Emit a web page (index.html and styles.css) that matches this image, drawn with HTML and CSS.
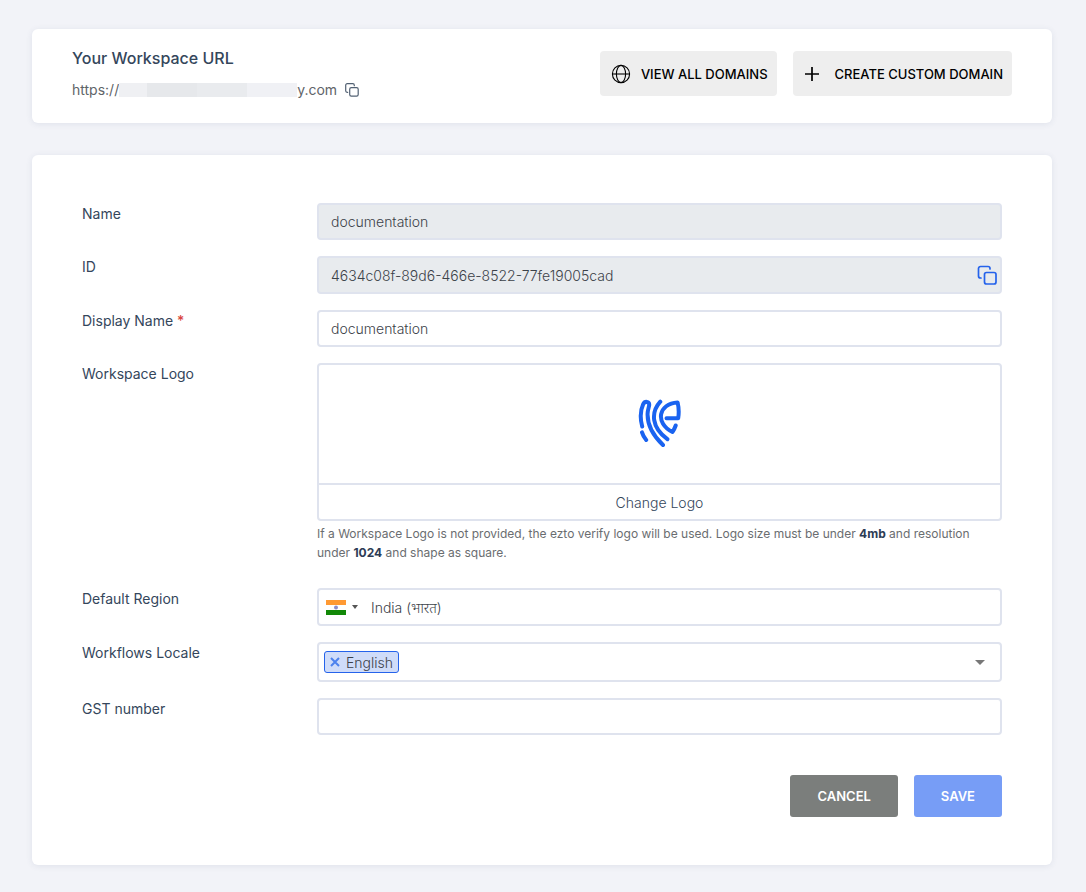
FILE: index.html
```html
<!DOCTYPE html>
<html lang="en">
<head>
<meta charset="utf-8">
<meta name="viewport" content="width=device-width, initial-scale=1">
<title>Workspace settings</title>
<link rel="stylesheet" href="styles.css">
</head>
<body>
<main class="page">
  <section class="card domain-card">
    <div class="domain-info">
      <h1 class="domain-title">Your Workspace URL</h1>
      <div class="domain-url">
        <span>https://</span><span class="redacted"><i></i><i></i><i></i><i></i></span><span>y.com</span>
        <button type="button" class="icon-button url-copy" aria-label="Copy URL">
          <svg width="14" height="14" viewBox="0 0 14 14" fill="none" stroke="currentColor" stroke-width="1.2" stroke-linecap="round"><rect x="4.7" y="4.7" width="8.5" height="8.5" rx="1.6"/><path d="M2.7 9.3H2.2A1.5 1.5 0 0 1 .7 7.8V2.2A1.5 1.5 0 0 1 2.2.7h5.6a1.5 1.5 0 0 1 1.500 1.500v.5"/></svg>
        </button>
      </div>
    </div>
    <div class="domain-actions">
      <button type="button" class="domain-button">
        <svg width="20" height="20" viewBox="0 0 20 20" fill="none" stroke="currentColor" stroke-width="1.1"><circle cx="10" cy="10" r="8.6"/><ellipse cx="10" cy="10" rx="4.600" ry="8.6"/><path d="M1.4 10h17.2"/></svg>
        <span>VIEW ALL DOMAINS</span>
      </button>
      <button type="button" class="domain-button create-button">
        <svg width="14" height="14" viewBox="0 0 14 14" fill="none" stroke="currentColor" stroke-width="1.7"><path d="M7 0v14M0 7h14"/></svg>
        <span>CREATE CUSTOM DOMAIN</span>
      </button>
    </div>
  </section>

  <form class="card settings-card">
    <div class="row">
      <label class="row-label" for="name">Name</label>
      <input class="field" id="name" type="text" value="documentation" disabled>
    </div>
    <div class="row">
      <label class="row-label" for="workspace-id">ID</label>
      <div class="field-group locked">
        <input class="bare-input" id="workspace-id" type="text" value="4634c08f-89d6-466e-8522-77fe19005cad" disabled>
        <button type="button" class="icon-button id-copy" aria-label="Copy ID">
          <svg width="20" height="20" viewBox="0 0 20 20" fill="none" stroke="currentColor" stroke-width="1.700" stroke-linecap="round"><rect x="7.500" y="7.500" width="11.500" height="11.500" rx="2"/><path d="M4 13H3.500a2 2 0 0 1-2-2V3.500a2 2 0 0 1 2-2h7.500a2 2 0 0 1 2 2v.5"/></svg>
        </button>
      </div>
    </div>
    <div class="row">
      <label class="row-label" for="display-name">Display Name <span class="required">*</span></label>
      <input class="field" id="display-name" type="text" value="documentation">
    </div>
    <div class="row logo-row">
      <label class="row-label" for="change-logo">Workspace Logo</label>
      <div>
        <div class="logo-box">
          <div class="logo-preview">
            <svg width="44" height="50" viewBox="0 0 44 50" fill="none" stroke="#1a63f0" stroke-width="4" stroke-linecap="round" stroke-linejoin="round" role="img" aria-label="Workspace logo"><path d="M4.200 27.500C2.200 20 2.500 11 5.200 5.200c1.600-3.400 6.200-3 6 .8-.2 2.400-1.400 4-1.600 8.600C9.200 26 14 35.500 25 46M4 33.300c1 3.200 2.300 5.400 4.200 7.700M22.300 2.700C12.500 13.500 13.500 28.500 29.400 40.200M28.500 19.300h11.700c.8-5 .8-10-.6-15.900C20.500 4.500 16.500 24 34.500 33c1.500-2.400 2.500-4.400 3.200-6.500"/></svg>
          </div>
          <button type="button" class="change-logo" id="change-logo">Change Logo</button>
        </div>
        <p class="help">If a Workspace Logo is not provided, the ezto verify logo will be used. Logo size must be under <strong>4mb</strong> and resolution under <strong>1024</strong> and shape as square.</p>
      </div>
    </div>
    <div class="row">
      <label class="row-label" for="region">Default Region</label>
      <div class="field-group">
        <button type="button" class="flag-button" aria-label="Choose country">
          <svg width="20" height="15" viewBox="0 0 20 15"><path fill="#f93" d="M0 0h20v5H0z"/><path fill="#fff" d="M0 5h20v5H0z"/><path fill="#128807" d="M0 10h20v5H0z"/><circle cx="10" cy="7.500" r="2" fill="#8c8ccb"/></svg>
          <span class="small-caret"></span>
        </button>
        <input class="bare-input" id="region" type="text" value="India (भारत)">
      </div>
    </div>
    <div class="row">
      <label class="row-label" for="locale">Workflows Locale</label>
      <div class="field-group locale-group">
        <span class="chip">
          <button type="button" class="icon-button chip-remove" aria-label="Remove English"><svg width="10" height="10" viewBox="0 0 10 10" stroke="currentColor" stroke-width="2"><path d="m1 1 8 8M9 1 1 9"/></svg></button>
          <span>English</span>
        </span>
        <input class="bare-input" id="locale" type="text" autocomplete="off">
        <button type="button" class="icon-button locale-toggle" aria-label="Show locales"><span class="caret"></span></button>
      </div>
    </div>
    <div class="row">
      <label class="row-label" for="gst">GST number</label>
      <input class="field" id="gst" type="text">
    </div>
    <div class="form-actions">
      <button type="button" class="action cancel">CANCEL</button>
      <button type="submit" class="action save">SAVE</button>
    </div>
  </form>
</main>
</body>
</html>
```

FILE: styles.css
```css
*, *::before, *::after { box-sizing: border-box; }

body {
  margin: 0;
  background: #f2f3f8;
  color: #34465b;
  font-family: Inter, "Noto Sans", "Liberation Sans", sans-serif;
  font-size: 14px;
}

button, input { font: inherit; color: inherit; }
button { cursor: pointer; }

.page {
  display: flex;
  flex-direction: column;
  gap: 32px;
  padding: 29px 34px 27px 32px;
}

.card {
  background: #fff;
  border-radius: 6px;
  box-shadow: 0 1px 6px rgba(60, 80, 120, 0.1);
}

.domain-card {
  display: flex;
  justify-content: space-between;
  align-items: flex-start;
  gap: 24px;
  padding: 17px 40px 22px;
}

.domain-title {
  margin: 0;
  font-size: 16px;
  line-height: 24px;
  font-weight: 500;
}

.domain-url {
  display: flex;
  align-items: center;
  margin-top: 9px;
  line-height: 22px;
  color: #606468;
}

.redacted {
  display: flex;
  width: 178px;
  height: 14px;
}
.redacted i { flex: 50 0 0; background: #e9ebee; }
.redacted i:first-child { flex-grow: 28; background: #eff0f3; }
.redacted i:nth-child(2) { background: #e6e8eb; }
.redacted i:last-child { background: #f0f1f5; }

.icon-button {
  display: flex;
  align-items: center;
  justify-content: center;
  padding: 0;
  border: 0;
  background: none;
}

.url-copy { margin-left: 8px; color: #526173; }

.domain-actions { display: flex; gap: 16px; padding-top: 5px; }

.domain-button {
  display: flex;
  align-items: center;
  gap: 10px;
  height: 45px;
  padding: 0 9px 0 11px;
  border: 0;
  border-radius: 4px;
  background: #eee;
  color: #000;
  font-size: 13px;
  font-weight: 500;
}
.create-button { gap: 16px; padding-left: 12px; }

.settings-card { padding: 48px 50px; }

.row {
  display: grid;
  grid-template-columns: 235px minmax(0, 1fr);
  align-items: start;
  margin-bottom: 16px;
}
.logo-row { margin-bottom: 26px; }

.row-label { line-height: 22px; }
.required { color: #d9453d; font-weight: 500; }

.field, .field-group, .logo-box {
  width: 100%;
  border: 2px solid #dfe3ee;
  border-radius: 4px;
  background: #fff;
}

.field, .bare-input { color: #3c4249; font-weight: 300; }
.field { height: 37px; padding: 0 12px; }
.field:disabled, .locked { background: #e8ebee; }

.field-group { display: flex; align-items: center; height: 38px; }

.bare-input {
  flex: 1;
  min-width: 0;
  height: 100%;
  padding: 0 12px;
  border: 0;
  background: none;
}

.id-copy { margin-right: 3px; color: #2563eb; }

.logo-preview {
  display: flex;
  align-items: center;
  justify-content: center;
  height: 118px;
}

.change-logo {
  display: block;
  width: 100%;
  height: 36px;
  border: 0;
  border-top: 2px solid #dfe3ee;
  background: none;
  font-weight: 300;
}

.help {
  margin: 3px 0 0;
  color: #6a6d70;
  font-size: 12px;
  line-height: 19px;
}
.help strong { color: #2d3c55; font-weight: 700; }

.flag-button {
  display: flex;
  align-items: center;
  gap: 6px;
  height: 100%;
  padding: 0 1px 0 7px;
  border: 0;
  background: none;
}

.small-caret {
  border: 3px solid transparent;
  border-top: 4px solid #555;
  border-bottom: 0;
}

.locale-group { height: 40px; padding-left: 5px; }

.chip {
  display: flex;
  align-items: center;
  gap: 6px;
  height: 22px;
  padding: 0 5px;
  border: 1px solid #2563eb;
  border-radius: 3px;
  background: #cfdcf9;
  color: #3c4249;
  font-weight: 300;
}
.chip-remove { color: #4c82ee; }

.locale-toggle { width: 40px; height: 100%; }
.caret {
  border: 5px solid transparent;
  border-top-color: #777;
  border-bottom: 0;
}

.form-actions {
  display: flex;
  justify-content: flex-end;
  gap: 16px;
  margin-top: 40px;
}

.action {
  height: 42px;
  padding: 0 27px;
  border: 0;
  border-radius: 3px;
  color: #fff;
  font-size: 13px;
  font-weight: 600;
}
.cancel { background: #7b7e7c; }
.save { background: #779df6; }
```
